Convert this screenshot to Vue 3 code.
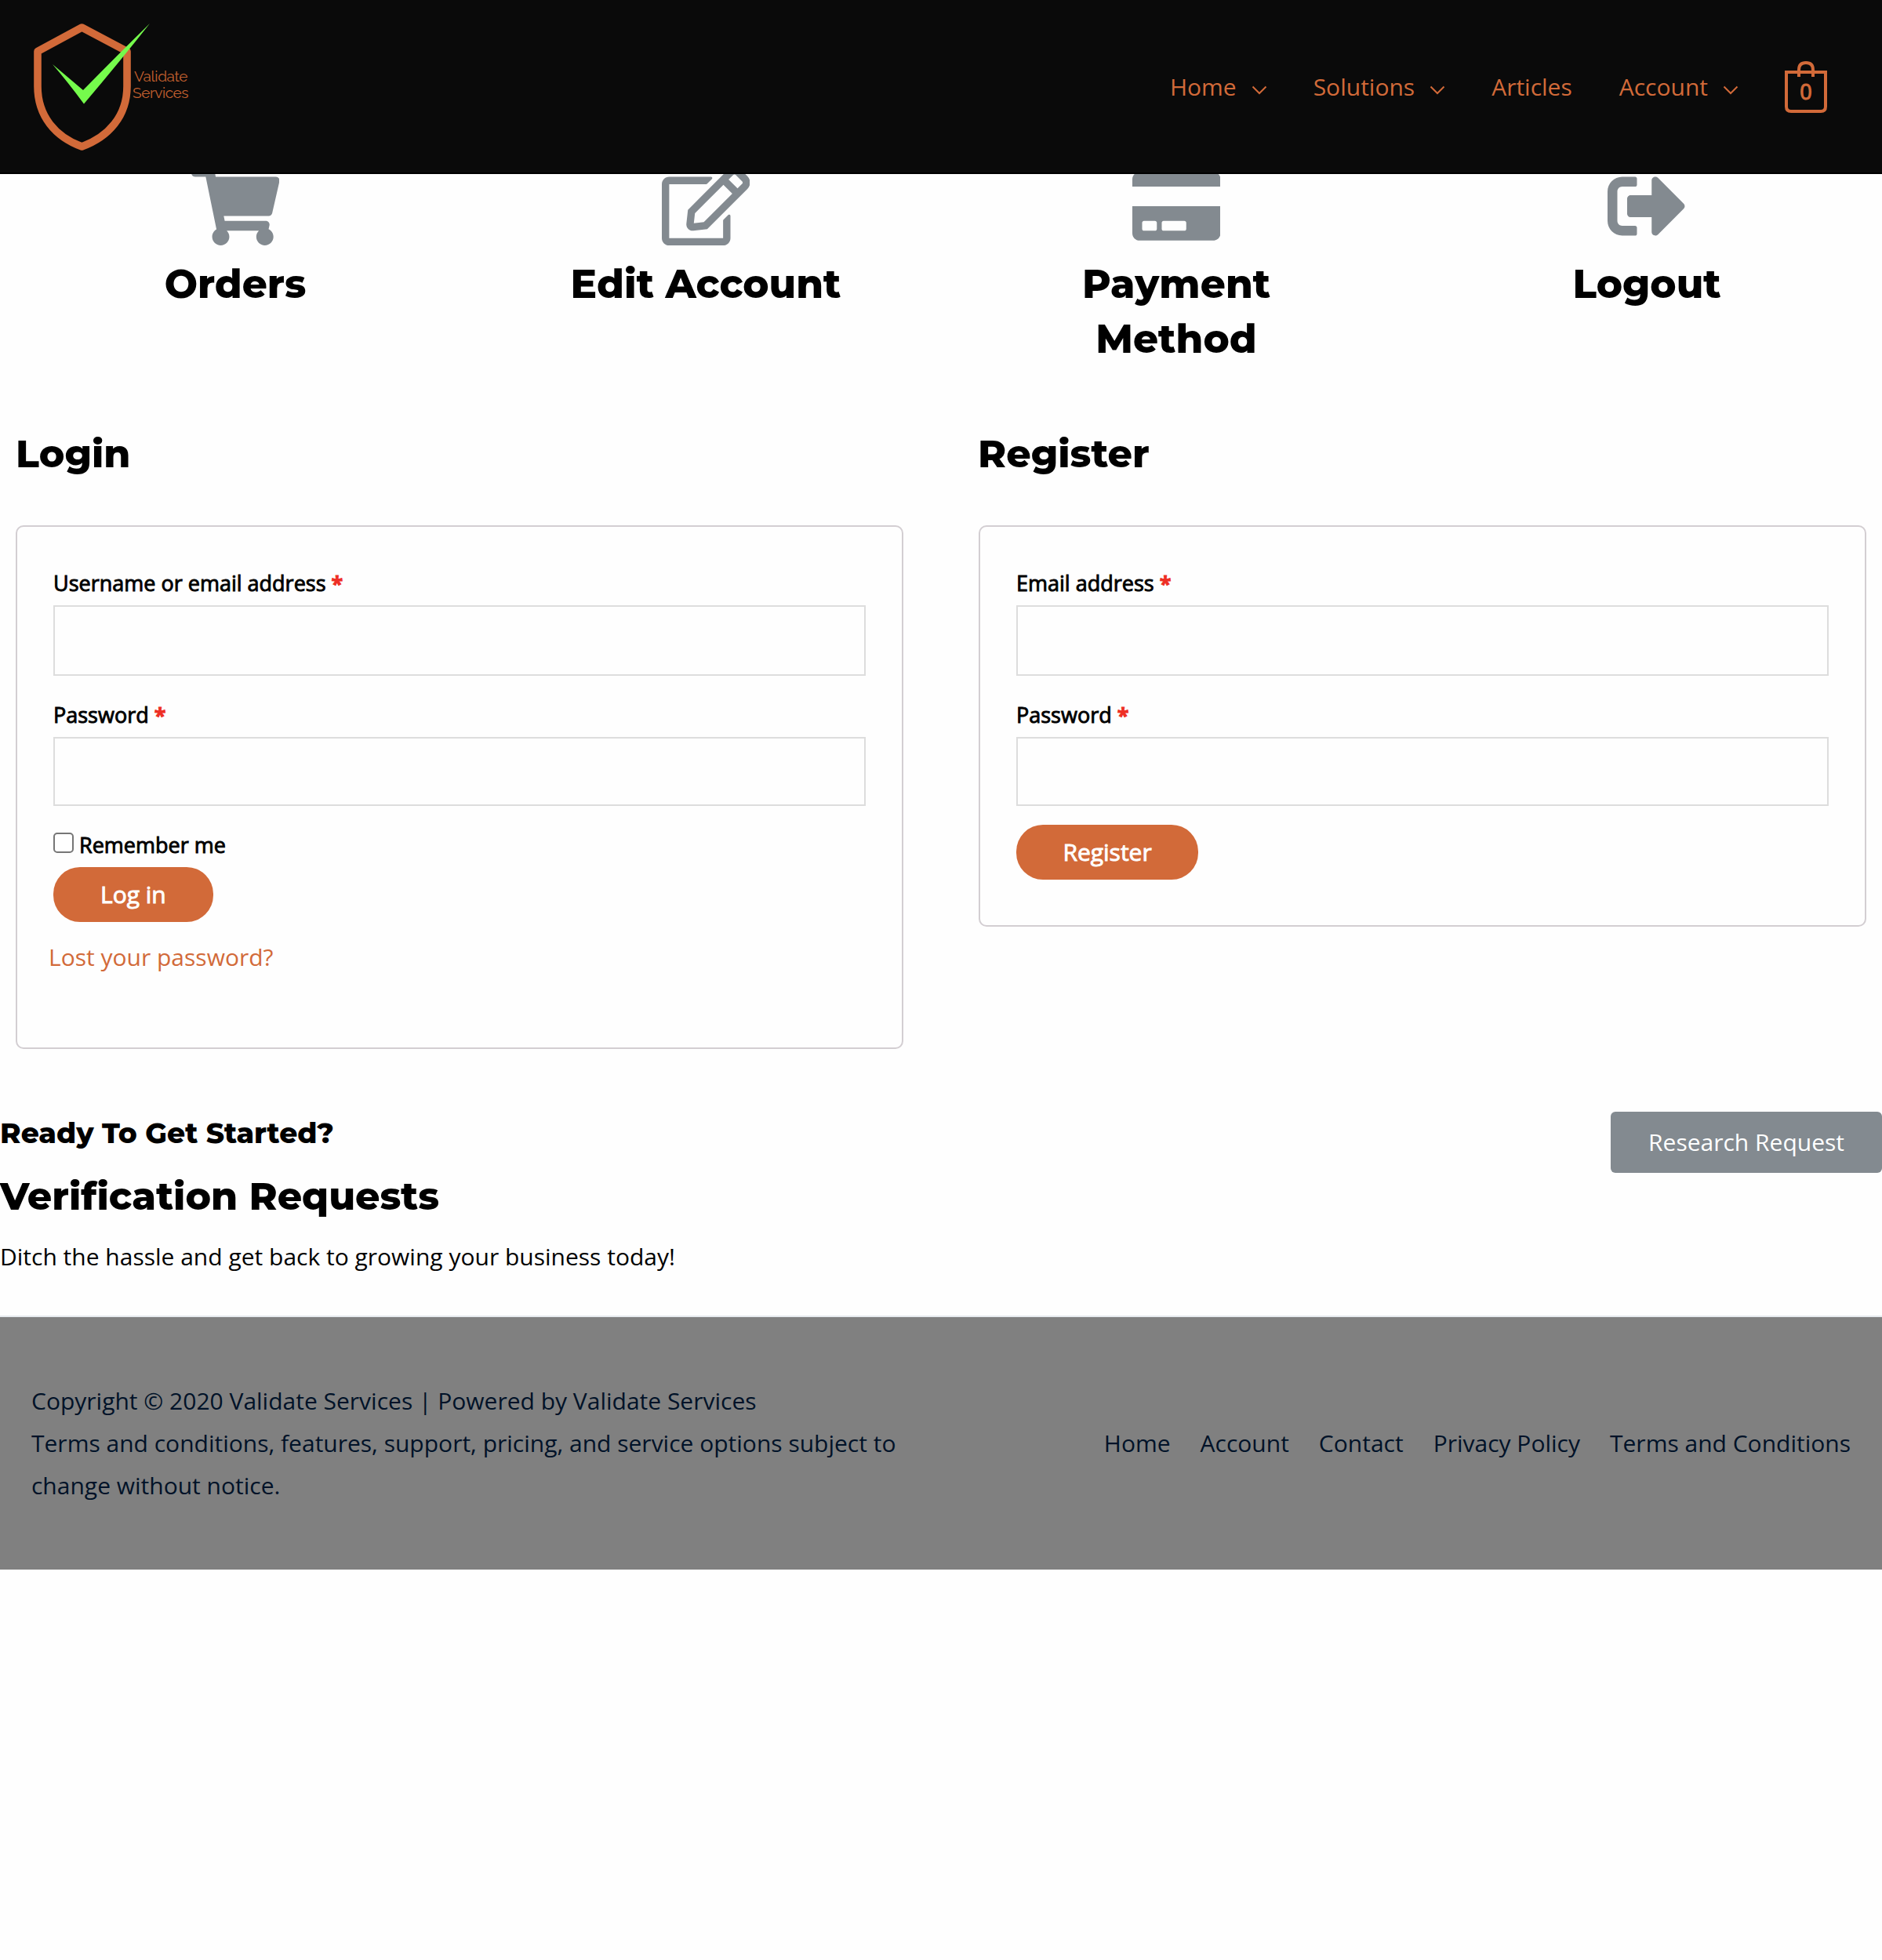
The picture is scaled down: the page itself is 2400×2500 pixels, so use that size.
<script setup>
const navItems = [
  { label: 'Home', menu: true },
  { label: 'Solutions', menu: true },
  { label: 'Articles', menu: false },
  { label: 'Account', menu: true },
]

const features = [
  {
    lines: ['Orders'],
    width: 576,
    path: 'M528.12 301.319l47.273-208C578.806 78.301 567.391 64 551.99 64H159.208l-9.166-44.81C147.758 8.021 137.93 0 126.529 0H24C10.745 0 0 10.745 0 24v16c0 13.255 10.745 24 24 24h69.883l70.248 343.435C147.325 417.1 136 435.222 136 456c0 30.928 25.072 56 56 56s56-25.072 56-56c0-15.674-6.447-29.835-16.824-40h209.647C430.447 426.165 424 440.326 424 456c0 30.928 25.072 56 56 56s56-25.072 56-56c0-22.172-12.888-41.332-31.579-50.405l5.517-24.276c3.413-15.018-8.002-29.319-23.403-29.319H218.117l-6.545-32h293.145c11.206 0 20.92-7.754 23.403-18.681z',
  },
  {
    lines: ['Edit Account'],
    width: 576,
    path: 'M402.3 344.9l32-32c5-5 13.7-1.5 13.7 5.7V464c0 26.5-21.5 48-48 48H48c-26.5 0-48-21.5-48-48V112c0-26.5 21.5-48 48-48h273.5c7.1 0 10.7 8.6 5.7 13.7l-32 32c-1.5 1.5-3.5 2.3-5.7 2.3H48v352h352V350.5c0-2.1.8-4.1 2.3-5.6zm156.6-201.8L296.3 405.7l-90.4 10c-26.2 2.9-48.5-19.2-45.6-45.6l10-90.4L432.9 17.1c22.9-22.9 59.9-22.9 82.7 0l43.2 43.2c22.9 22.9 22.9 60 .1 82.8zM460.1 174L402 115.9 216.2 301.8l-7.3 65.3 65.3-7.3L460.1 174zm64.8-79.7l-43.2-43.2c-4.1-4.1-10.8-4.1-14.8 0L436 82l58.1 58.1 30.9-30.9c4-4.2 4-10.8-.1-14.9z',
  },
  {
    lines: ['Payment', 'Method'],
    width: 576,
    path: 'M0 432c0 26.5 21.5 48 48 48h480c26.5 0 48-21.5 48-48V256H0v176zm192-68c0-6.6 5.4-12 12-12h136c6.6 0 12 5.4 12 12v40c0 6.6-5.4 12-12 12H204c-6.6 0-12-5.4-12-12v-40zm-128 0c0-6.6 5.4-12 12-12h72c6.6 0 12 5.4 12 12v40c0 6.6-5.4 12-12 12H76c-6.6 0-12-5.4-12-12v-40zM576 80v48H0V80c0-26.5 21.5-48 48-48h480c26.5 0 48 21.5 48 48z',
  },
  {
    lines: ['Logout'],
    width: 512,
    path: 'M497 273L329 441c-15 15-41 4.5-41-17v-96H152c-13.3 0-24-10.7-24-24v-96c0-13.3 10.7-24 24-24h136V88c0-21.4 25.9-32 41-17l168 168c9.3 9.4 9.3 24.6 0 34zM192 436v-40c0-6.6-5.4-12-12-12H96c-17.7 0-32-14.3-32-32V160c0-17.7 14.3-32 32-32h84c6.6 0 12-5.4 12-12V76c0-6.6-5.4-12-12-12H96c-53 0-96 43-96 96v192c0 53 43 96 96 96h84c6.6 0 12-5.4 12-12z',
  },
]

const footerLinks = ['Home', 'Account', 'Contact', 'Privacy Policy', 'Terms and Conditions']
</script>

<template>
  <div class="page">
    <header class="site-header">
      <svg class="logo" viewBox="0 0 260 220" width="260" height="220" role="img" aria-label="Validate Services">
        <path
          d="M104.4 35 L162 65.5 V110 C162 148 138.5 174.5 104.4 187 C70.5 174.5 48 148 48 110 V65.5 Z"
          fill="none" stroke="#d26a39" stroke-width="9.6" stroke-linejoin="round"
        />
        <path d="M67 82 Q86 98 106 115 Q150 70 191 30 Q154 77 107 132.5 Q86 104 67 82 Z" fill="#75fb4c" />
        <text x="171" y="103.7" textLength="68.5">Validate</text>
        <text x="169" y="125" textLength="71.5">Services</text>
      </svg>
      <nav class="main-nav">
        <a v-for="item in navItems" :key="item.label" class="nav-link">
          {{ item.label }}
          <svg v-if="item.menu" class="chevron" viewBox="0 0 20 12" width="20" height="12">
            <path d="M1.5 1.5 L10 10 L18.5 1.5" fill="none" stroke="currentColor" stroke-width="2" />
          </svg>
        </a>
        <a class="cart">
          <svg viewBox="0 0 54 66" width="54" height="66">
            <path d="M2 14 H52 V58 Q52 64 46 64 H8 Q2 64 2 58 Z" fill="none" stroke="currentColor" stroke-width="4" />
            <path d="M18 20 V11 Q18 2 27 2 Q36 2 36 11 V20" fill="none" stroke="currentColor" stroke-width="4" />
          </svg>
          <span class="cart-count">0</span>
        </a>
      </nav>
    </header>

    <main>
      <section class="features">
        <div v-for="feature in features" :key="feature.lines[0]" class="feature">
          <svg :viewBox="`0 0 ${feature.width} 512`" height="100" fill="#838a90"><path :d="feature.path" /></svg>
          <h3><template v-for="line in feature.lines" :key="line">{{ line }}<br></template></h3>
        </div>
      </section>

      <section class="account">
        <div class="column">
          <h2>Login</h2>
          <form class="card login" @submit.prevent>
            <label for="login-user">Username or email address <span class="required">*</span></label>
            <input id="login-user" class="field tall" type="text">
            <label for="login-pass">Password <span class="required">*</span></label>
            <input id="login-pass" class="field" type="password">
            <label class="remember"><input type="checkbox">Remember me</label>
            <button class="submit">Log in</button>
            <a class="lost">Lost your password?</a>
          </form>
        </div>
        <div class="column">
          <h2 class="register-title">Register</h2>
          <form class="card" @submit.prevent>
            <label for="reg-email">Email address <span class="required">*</span></label>
            <input id="reg-email" class="field tall" type="email">
            <label for="reg-pass">Password <span class="required">*</span></label>
            <input id="reg-pass" class="field" type="password">
            <button class="submit register">Register</button>
          </form>
        </div>
      </section>

      <section class="cta">
        <div>
          <h4>Ready To Get Started?</h4>
          <h2>Verification Requests</h2>
          <p>Ditch the hassle and get back to growing your business today!</p>
        </div>
        <a class="research">Research Request</a>
      </section>
    </main>

    <footer class="site-footer">
      <div class="legal">
        <p>Copyright © 2020 Validate Services | Powered by Validate Services</p>
        <p>Terms and conditions, features, support, pricing, and service options subject to change without notice.</p>
      </div>
      <nav class="footer-nav">
        <a v-for="link in footerLinks" :key="link">{{ link }}</a>
      </nav>
    </footer>
  </div>
</template>

<style>
body {
  background: #fefefe;
}
</style>

<style scoped>
.page {
  position: relative;
  width: 2400px;
  height: 2500px;
  background: #fefefe;
  color: #000;
  font: 30px/54px "Open Sans", "Noto Sans", sans-serif;
}

h2, h3, h4, p {
  margin: 0;
}

h2, h3 {
  font: 800 50px/70px Montserrat, Inter, sans-serif;
  font-variant-ligatures: none;
}

.site-header {
  position: absolute;
  z-index: 1;
  top: 0;
  left: 0;
  box-sizing: border-box;
  display: flex;
  justify-content: space-between;
  align-items: center;
  width: 100%;
  height: 222px;
  padding-right: 70px;
  border-bottom: 2px solid #000;
  background: #0a0a0a;
  color: #d26a39;
}

.logo text {
  font: 400 19px Raleway, Lato, sans-serif;
  fill: #c4602f;
}

.main-nav {
  display: flex;
  align-items: center;
  padding-top: 2px;
}

.nav-link {
  display: flex;
  align-items: center;
  margin-right: 60px;
}

.chevron {
  margin: 8px -1px 0 19px;
}

.cart {
  position: relative;
  display: block;
  width: 54px;
  height: 66px;
}

.cart svg {
  display: block;
}

.cart-count {
  position: absolute;
  inset: 20px 0 auto;
  font-size: 27px;
  line-height: 38px;
  text-align: center;
  -webkit-text-stroke: 1.1px currentColor;
}

main {
  padding-top: 212.5px;
}

.features {
  display: grid;
  grid-template-columns: repeat(4, 600px);
}

.feature {
  text-align: center;
}

.feature svg {
  display: block;
  margin: 0 auto 15.5px;
}

.account {
  display: grid;
  grid-template-columns: 1132px 1132px;
  gap: 96px;
  align-items: start;
  padding: 76px 20px 0;
}

.column h2,
.cta h2 {
  font-size: 49px;
}

.column .register-title {
  margin-left: -1px;
}

.card {
  box-sizing: border-box;
  display: flex;
  flex-direction: column;
  align-items: flex-start;
  margin-top: 56px;
  padding: 51.4px 46px 58px;
  border: 2px solid #d3ced2;
  border-radius: 10px;
}

.card.login {
  height: 668px;
}

label {
  margin-bottom: 6.6px;
  font-size: 27px;
  line-height: 42px;
  -webkit-text-stroke: 0.9px currentColor;
}

.required {
  color: #ee2e24;
  font-weight: 700;
}

.field {
  box-sizing: border-box;
  width: 1036px;
  height: 88px;
  margin: 0 0 28.4px;
  border: 2px solid #ddd;
  border-radius: 0;
  background: #fefefe;
}

.field.tall {
  height: 90px;
  margin-bottom: 29.4px;
}

.remember {
  display: flex;
  margin: 1px 0 6.4px;
}

.remember input {
  appearance: none;
  box-sizing: border-box;
  width: 26px;
  height: 26px;
  margin: 5px 7px 0 0;
  border: 2px solid #767676;
  border-radius: 5px;
  background: #fff;
}

.submit {
  height: 70px;
  margin: 0;
  padding: 0 60px;
  border: 0;
  border-radius: 34px;
  background: #d26a39;
  color: #fff;
  font: 30px/70px "Open Sans", "Noto Sans", sans-serif;
  -webkit-text-stroke: 0.9px #fff;
}

.submit.register {
  margin-top: -4px;
  padding: 0 59.4px;
}

.lost {
  margin: 17.8px 0 0 -6px;
  color: #d26a39;
}

.cta {
  display: flex;
  justify-content: space-between;
  align-items: flex-start;
  height: 260px;
  margin-top: 80px;
}

.cta h4 {
  margin: 2px 0 20.5px;
  font: 800 36px/50px Montserrat, Inter, sans-serif;
}

.cta p {
  margin-top: 15.5px;
}

.research {
  height: 78px;
  padding: 0 48px;
  border-radius: 6px;
  background: #838a90;
  color: #fff;
  line-height: 78px;
}

.site-footer {
  box-sizing: border-box;
  display: flex;
  justify-content: space-between;
  align-items: center;
  height: 324px;
  padding: 0 40px;
  border-top: 2px solid #e6eaee;
  background: #808080;
  color: #001228;
}

.legal {
  width: 1130px;
}

.footer-nav {
  display: flex;
  gap: 38px;
}
</style>
